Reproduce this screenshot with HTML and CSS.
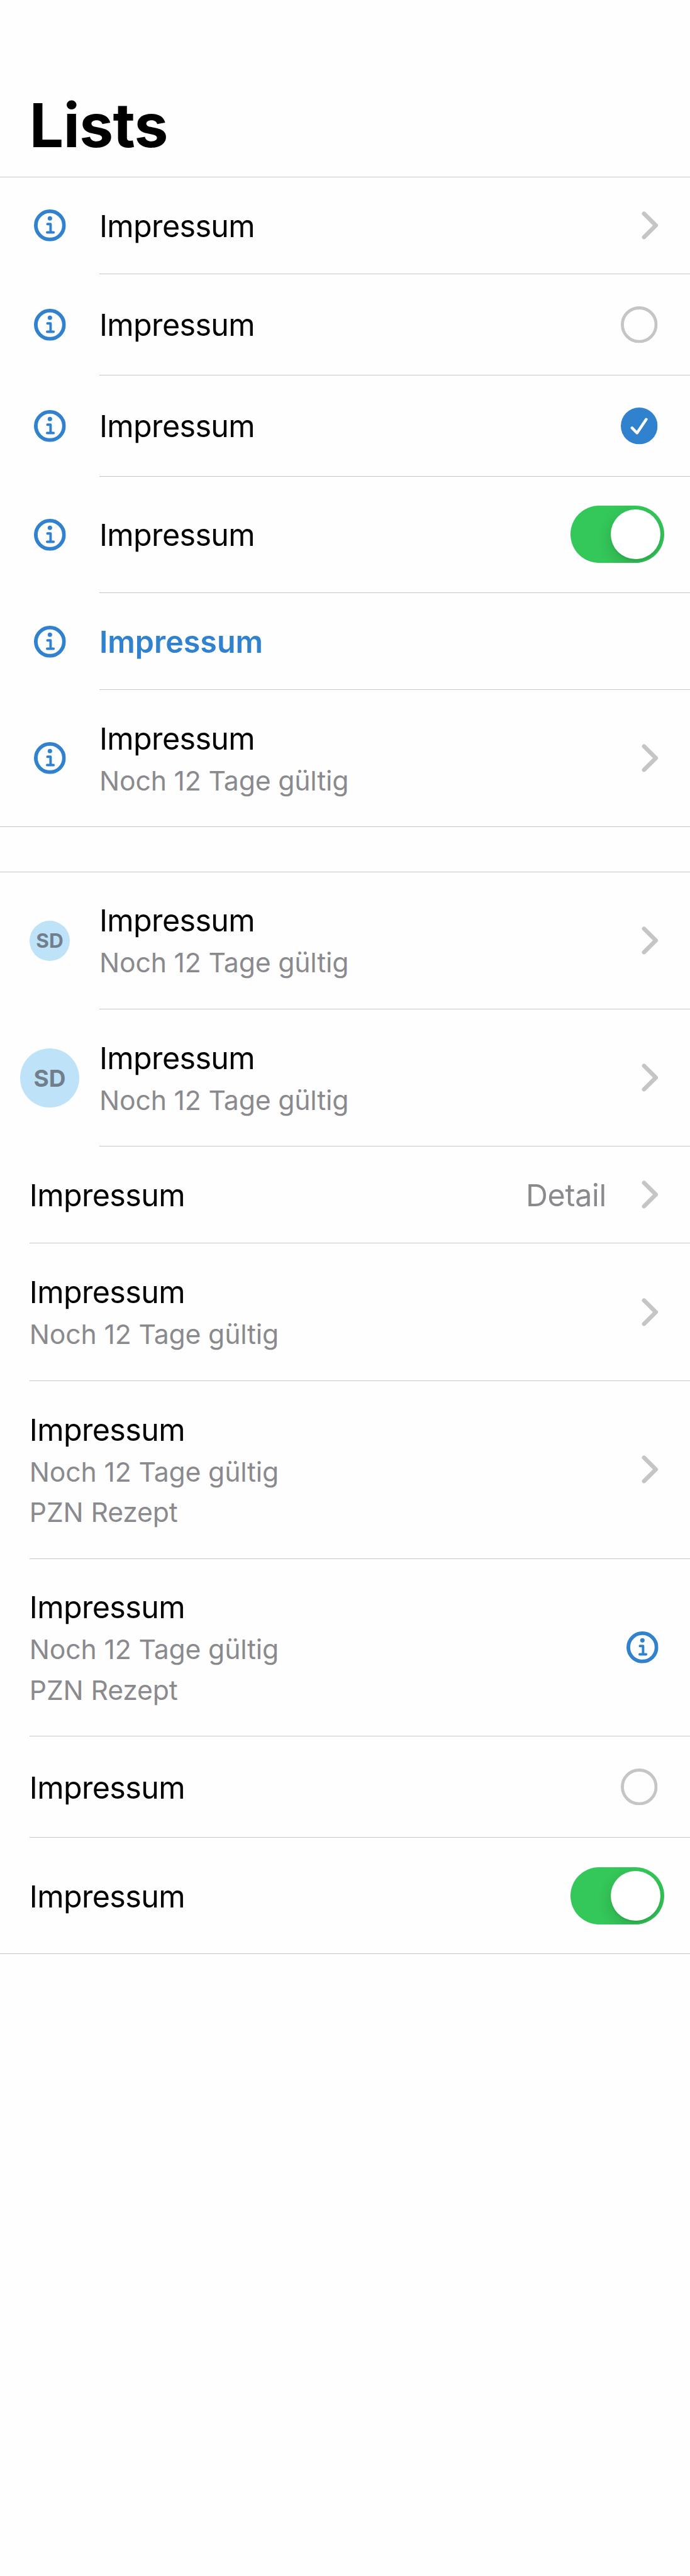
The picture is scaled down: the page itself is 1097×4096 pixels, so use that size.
FILE: index.html
```html
<!DOCTYPE html>
<html lang="de">
<head>
<meta charset="utf-8">
<title>Lists</title>
<link rel="stylesheet" href="styles.css">
</head>
<body>
<svg class="defs" aria-hidden="true">
  <symbol id="info" viewBox="-26 -26 52 52">
    <circle r="23" fill="none" stroke="currentColor" stroke-width="6"/>
    <circle cy="-11.4" r="3.6" fill="currentColor"/>
    <path d="M-4 -2.1H1.1V11.3M-4.5 11.5H6" fill="none" stroke="currentColor" stroke-width="4" stroke-linecap="round" stroke-linejoin="round"/>
  </symbol>
  <symbol id="chevron" viewBox="0 0 27 46">
    <path d="M4 3.8L23.3 23L4 42.2" fill="none" stroke="currentColor" stroke-width="6.8" stroke-linecap="round" stroke-linejoin="round"/>
  </symbol>
  <symbol id="ring" viewBox="-30 -30 60 60">
    <circle r="27.5" fill="none" stroke="currentColor" stroke-width="5"/>
  </symbol>
  <symbol id="check" viewBox="-30 -30 60 60">
    <circle r="30" fill="currentColor"/>
    <path d="M-11.7 3.2L-3.6 11.5L11.4 -10.7" fill="none" stroke="#fff" stroke-width="4.6" stroke-linecap="round" stroke-linejoin="round"/>
  </symbol>
</svg>
<header class="header"><h1 class="title">Lists</h1></header>
<main>
  <ul class="group">
    <li class="row"><span class="lead"><svg class="info"><use href="#info"/></svg></span><div class="body"><div class="text"><p class="label">Impressum</p></div><svg class="chevron"><use href="#chevron"/></svg></div></li>
    <li class="row"><span class="lead"><svg class="info"><use href="#info"/></svg></span><div class="body body-radio"><div class="text"><p class="label">Impressum</p></div><svg class="radio"><use href="#ring"/></svg></div></li>
    <li class="row"><span class="lead"><svg class="info"><use href="#info"/></svg></span><div class="body body-radio"><div class="text"><p class="label">Impressum</p></div><svg class="radio checked"><use href="#check"/></svg></div></li>
    <li class="row"><span class="lead"><svg class="info"><use href="#info"/></svg></span><div class="body body-switch"><div class="text"><p class="label">Impressum</p></div><span class="switch"><span class="knob"></span></span></div></li>
    <li class="row"><span class="lead"><svg class="info"><use href="#info"/></svg></span><div class="body"><div class="text"><p class="label action">Impressum</p></div></div></li>
    <li class="row"><span class="lead"><svg class="info"><use href="#info"/></svg></span><div class="body"><div class="text"><p class="label">Impressum</p><p class="sub">Noch 12 Tage gültig</p></div><svg class="chevron"><use href="#chevron"/></svg></div></li>
  </ul>
  <ul class="group">
    <li class="row"><span class="lead"><span class="avatar">SD</span></span><div class="body"><div class="text"><p class="label">Impressum</p><p class="sub">Noch 12 Tage gültig</p></div><svg class="chevron"><use href="#chevron"/></svg></div></li>
    <li class="row"><span class="lead"><span class="avatar large">SD</span></span><div class="body"><div class="text"><p class="label">Impressum</p><p class="sub">Noch 12 Tage gültig</p></div><svg class="chevron"><use href="#chevron"/></svg></div></li>
    <li class="row plain"><div class="body"><div class="text"><p class="label">Impressum</p></div><p class="label detail">Detail</p><svg class="chevron"><use href="#chevron"/></svg></div></li>
    <li class="row plain"><div class="body"><div class="text"><p class="label">Impressum</p><p class="sub">Noch 12 Tage gültig</p></div><svg class="chevron"><use href="#chevron"/></svg></div></li>
    <li class="row plain"><div class="body"><div class="text"><p class="label">Impressum</p><p class="sub">Noch 12 Tage gültig</p><p class="sub">PZN Rezept</p></div><svg class="chevron"><use href="#chevron"/></svg></div></li>
    <li class="row plain"><div class="body"><div class="text"><p class="label">Impressum</p><p class="sub">Noch 12 Tage gültig</p><p class="sub">PZN Rezept</p></div><svg class="info"><use href="#info"/></svg></div></li>
    <li class="row plain"><div class="body body-radio"><div class="text"><p class="label">Impressum</p></div><svg class="radio"><use href="#ring"/></svg></div></li>
    <li class="row plain"><div class="body body-switch"><div class="text"><p class="label">Impressum</p></div><span class="switch"><span class="knob"></span></span></div></li>
  </ul>
</main>
</body>
</html>
```
FILE: styles.css
```css
:root {
  --u: 0.975px;
  --line: #c6c6c8;
  --blue: #3182ce;
  --gray: #8a8a8e;
  --light: #c5c5c7;
}
* { box-sizing: border-box; }
body {
  margin: 0;
  min-height: 100vh;
  background: #fefefe;
  color: #000;
  font-family: Inter, "Liberation Sans", sans-serif;
}
h1, p, ul { margin: 0; padding: 0; }
ul { list-style: none; }
svg { display: block; flex: none; overflow: visible; }
.defs { position: absolute; width: 0; height: 0; }

.header {
  height: calc(288 * var(--u));
  padding: calc(144 * var(--u)) calc(48 * var(--u)) 0;
}
.title {
  font-size: calc(98.8 * var(--u));
  line-height: calc(123 * var(--u));
  font-weight: 700;
  letter-spacing: -0.6px;
}

.group { border-top: 1px solid var(--line); }
.group + .group { margin-top: calc(72 * var(--u)); }

.row { display: flex; }
.row:last-child { border-bottom: 1px solid var(--line); }
.row:last-child .body { border-bottom: 0; }
.plain { padding-left: calc(48 * var(--u)); }
.lead {
  width: calc(162 * var(--u));
  display: flex;
  align-items: center;
  justify-content: center;
  flex: none;
}
.body {
  flex: 1;
  display: flex;
  align-items: center;
  padding: calc(48 * var(--u)) calc(52 * var(--u)) calc(48 * var(--u)) 0;
  border-bottom: 1px solid var(--line);
}
.body-radio { padding: calc(52 * var(--u)) calc(53 * var(--u)) calc(51 * var(--u)) 0; }
.body-switch { padding-right: calc(42 * var(--u)); }
.text { flex: 1; }
.label {
  padding-top: calc(2 * var(--u));
  font-size: calc(49.6 * var(--u));
  line-height: calc(59 * var(--u));
  letter-spacing: -0.6px;
}
.action { color: var(--blue); font-weight: 600; letter-spacing: 0; }
.detail { color: var(--gray); margin-right: calc(57.5 * var(--u)); letter-spacing: -0.3px; }
.sub {
  padding-top: calc(14 * var(--u));
  font-size: calc(43.8 * var(--u));
  line-height: calc(52 * var(--u));
  letter-spacing: -0.15px;
  color: var(--gray);
}

.info { width: calc(52 * var(--u)); height: calc(52 * var(--u)); color: var(--blue); }
.chevron { width: calc(27 * var(--u)); height: calc(46 * var(--u)); color: var(--light); }
.radio { width: calc(60 * var(--u)); height: calc(60 * var(--u)); color: var(--light); }
.checked { color: var(--blue); }
.switch {
  display: flex;
  justify-content: flex-end;
  width: calc(153 * var(--u));
  height: calc(93 * var(--u));
  padding: calc(6 * var(--u));
  border-radius: calc(47 * var(--u));
  background: #34c759;
  overflow: hidden;
}
.knob {
  width: calc(81 * var(--u));
  height: calc(81 * var(--u));
  border-radius: 50%;
  background: #fff;
  box-shadow: 0 calc(9 * var(--u)) calc(24 * var(--u)) rgba(0, 0, 0, .15), 0 calc(3 * var(--u)) calc(3 * var(--u)) rgba(0, 0, 0, .06);
}
.avatar {
  display: flex;
  align-items: center;
  justify-content: center;
  width: calc(66 * var(--u));
  height: calc(66 * var(--u));
  border-radius: 50%;
  background: #bee3f8;
  color: #717f8d;
  font-size: calc(32.4 * var(--u));
  font-weight: 700;
}
.avatar.large {
  width: calc(96 * var(--u));
  height: calc(96 * var(--u));
  font-size: calc(38 * var(--u));
}
```
